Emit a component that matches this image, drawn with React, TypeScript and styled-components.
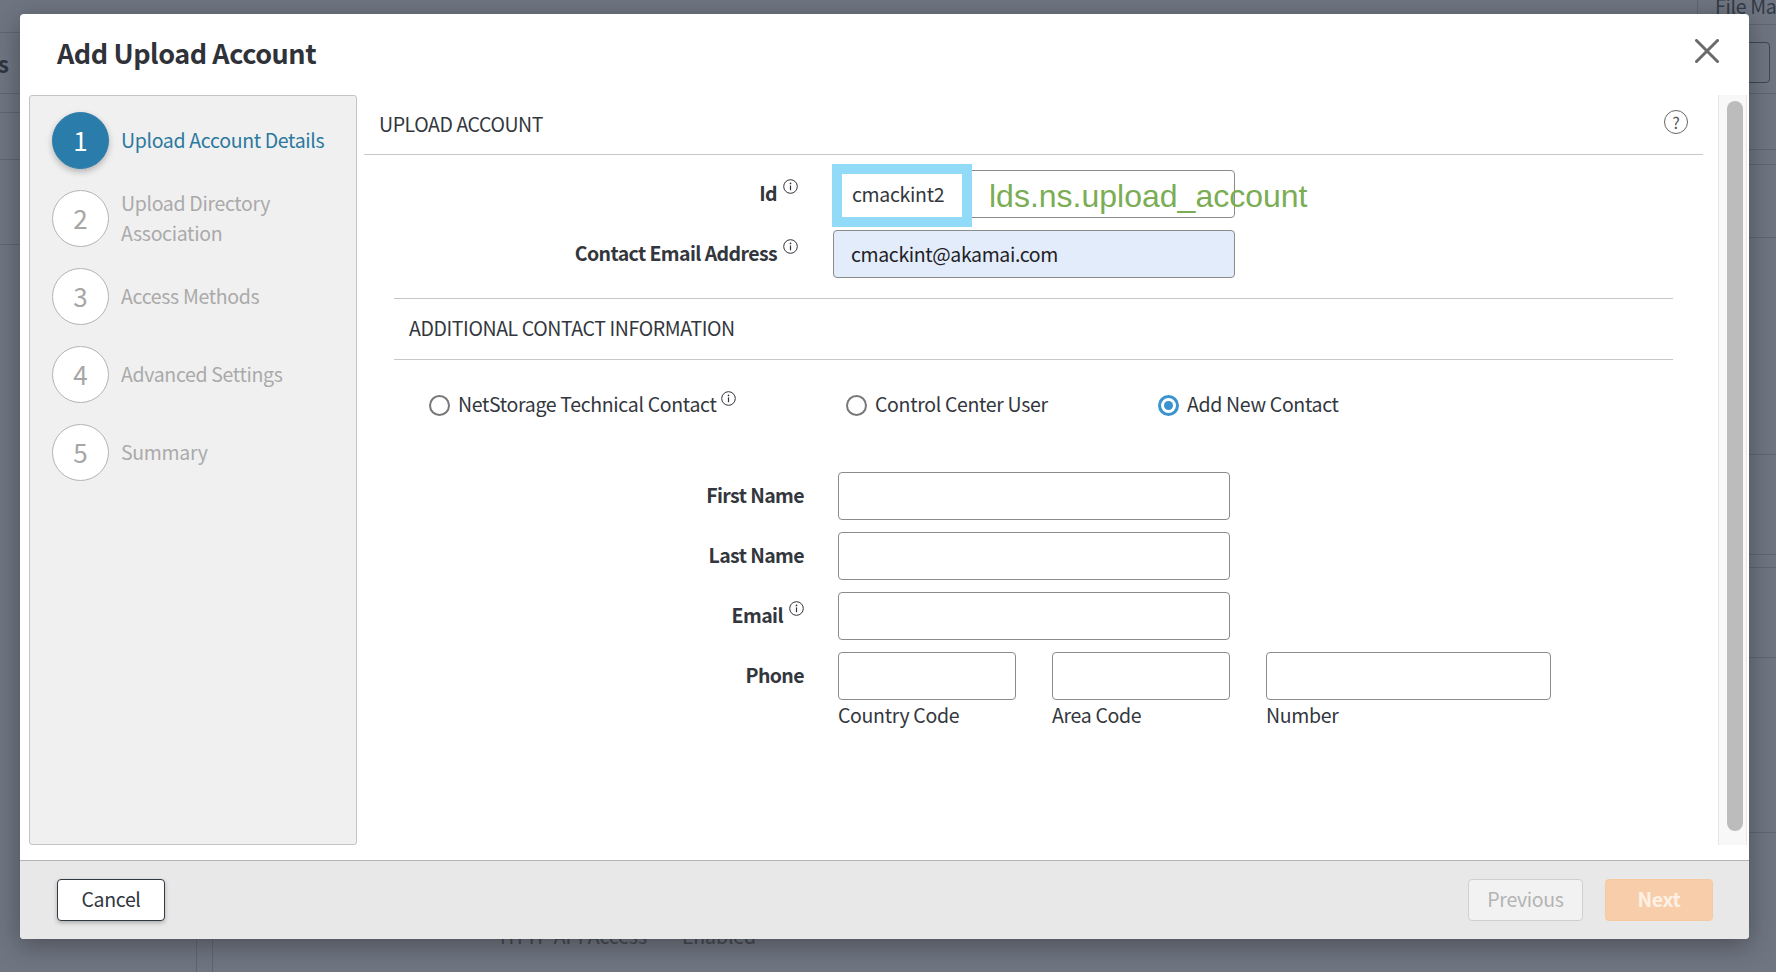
import React from "react";
import styled, { createGlobalStyle, css } from "styled-components";

const STEPS = [
  "Upload Account Details",
  "Upload Directory Association",
  "Access Methods",
  "Advanced Settings",
  "Summary",
];

const LEFT_LINES = [32, 93, 112, 159, 244];
const RIGHT_LINES = [24, 93, 149, 164, 237, 454, 554, 567, 657, 832];

const line = "linear-gradient(#5f6672, #5f6672)";
const backImages = [
  ...LEFT_LINES.map(() => line),
  ...RIGHT_LINES.map(() => line),
  line,
  line,
  line,
].join(", ");
const backSizes = [
  ...LEFT_LINES.map(() => "20px 1px"),
  ...RIGHT_LINES.map(() => "27px 1px"),
  "1px 33px",
  "1px 33px",
  "1px 14px",
].join(", ");
const backPositions = [
  ...LEFT_LINES.map((y) => `0 ${y}px`),
  ...RIGHT_LINES.map((y) => `1749px ${y}px`),
  "196px 939px",
  "212px 939px",
  "1697px 0",
].join(", ");

const InfoIcon = () => (
  <InfoSvg viewBox="0 0 15 15" aria-hidden="true">
    <circle cx="7.5" cy="7.5" r="6.8" fill="none" stroke="#2f3238" strokeWidth="1" />
    <circle cx="7.5" cy="4.4" r="0.85" fill="#2f3238" />
    <path d="M7.5 6.4v4.8" stroke="#2f3238" strokeWidth="1.2" fill="none" />
  </InfoSvg>
);

const App = () => {
  return (
    <Page>
      <GlobalStyle />
      <BackTop>
        <SideWord>Files</SideWord>
        <BackRight>
          <BackTitle>File Manager</BackTitle>
          <BackButton />
        </BackRight>
      </BackTop>
      <BackBottom>
        <BackCell>HTTP API Access</BackCell>
        <BackCell>Enabled</BackCell>
      </BackBottom>

      <Modal>
        <ModalHeader>
          <Title>Add Upload Account</Title>
          <CloseSvg viewBox="0 0 24 24" aria-label="close">
            <path d="M1.5 1.5l21 21M22.5 1.5l-21 21" stroke="#6a6a6a" strokeWidth="3" strokeLinecap="round" fill="none" />
          </CloseSvg>
        </ModalHeader>

        <ModalBody>
          <Sidebar>
            {STEPS.map((step, i) => (
              <Step key={step}>
                <StepCircle $active={i === 0}>{i + 1}</StepCircle>
                <StepLabel $active={i === 0}>{step}</StepLabel>
              </Step>
            ))}
          </Sidebar>

          <Content>
            <SectionTitle>
              UPLOAD ACCOUNT
              <HelpIcon>?</HelpIcon>
            </SectionTitle>

            <AccountFields>
              <FormRow $labelWidth={404} $gap={35} $inputWidth={402}>
                <FieldLabel>
                  Id <InfoIcon />
                </FieldLabel>
                <IdField>
                  <TextInput readOnly aria-label="Id" />
                  <IdHighlight>cmackint2</IdHighlight>
                  <Annotation>lds.ns.upload_account</Annotation>
                </IdField>
              </FormRow>
              <FormRow $labelWidth={404} $gap={35} $inputWidth={402}>
                <FieldLabel>
                  Contact Email Address <InfoIcon />
                </FieldLabel>
                <TextInput $filled readOnly value="cmackint@akamai.com" aria-label="Contact Email Address" />
              </FormRow>
            </AccountFields>

            <SubTitle>ADDITIONAL CONTACT INFORMATION</SubTitle>

            <RadioRow>
              <RadioItem>
                <Radio />
                <RadioText>NetStorage Technical Contact</RadioText>
                <RadioInfo>
                  <InfoIcon />
                </RadioInfo>
              </RadioItem>
              <RadioItem>
                <Radio />
                <RadioText>Control Center User</RadioText>
              </RadioItem>
              <RadioItem>
                <Radio $checked />
                <RadioText>Add New Contact</RadioText>
              </RadioItem>
            </RadioRow>

            <ContactFields>
              <FormRow $labelWidth={410} $gap={34} $inputWidth={392}>
                <FieldLabel>First Name</FieldLabel>
                <TextInput readOnly aria-label="First Name" />
              </FormRow>
              <FormRow $labelWidth={410} $gap={34} $inputWidth={392}>
                <FieldLabel>Last Name</FieldLabel>
                <TextInput readOnly aria-label="Last Name" />
              </FormRow>
              <FormRow $labelWidth={410} $gap={34} $inputWidth={392}>
                <FieldLabel>
                  Email <InfoIcon />
                </FieldLabel>
                <TextInput readOnly aria-label="Email" />
              </FormRow>
              <PhoneRow>
                <FieldLabel>Phone</FieldLabel>
                <PhoneFields>
                  <PhonePart>
                    <TextInput readOnly aria-label="Country Code" />
                    Country Code
                  </PhonePart>
                  <PhonePart>
                    <TextInput readOnly aria-label="Area Code" />
                    Area Code
                  </PhonePart>
                  <PhonePart>
                    <TextInput readOnly aria-label="Number" />
                    Number
                  </PhonePart>
                </PhoneFields>
              </PhoneRow>
            </ContactFields>
          </Content>

          <ScrollTrack>
            <ScrollThumb />
          </ScrollTrack>
        </ModalBody>

        <ModalFooter>
          <CancelButton>Cancel</CancelButton>
          <FooterRight>
            <PreviousButton>Previous</PreviousButton>
            <NextButton>Next</NextButton>
          </FooterRight>
        </ModalFooter>
      </Modal>
    </Page>
  );
};

// the reference font runs a bit narrower than Noto's latin, so tighten it
const bodyText = css`
  font-size: 19.5px;
  letter-spacing: -0.33px;
  line-height: 30px;
`;

const GlobalStyle = createGlobalStyle`
  html, body {
    margin: 0;
    padding: 0;
  }

  body {
    font-family: "Noto Sans CJK SC", "Noto Sans", sans-serif;
    color: #33373d;
  }

  * {
    box-sizing: border-box;
  }
`;

const Page = styled.div`
  position: relative;
  display: flex;
  flex-direction: column;
  justify-content: space-between;
  width: 1776px;
  height: 972px;
  overflow: hidden;
  background-color: #6f7682;
  background-image: ${backImages};
  background-repeat: no-repeat;
  background-size: ${backSizes};
  background-position: ${backPositions};
`;

const BackTop = styled.div`
  display: flex;
  justify-content: space-between;
  height: 90px;
`;

const SideWord = styled.div`
  width: 9px;
  height: 34px;
  margin-top: 46px;
  overflow: hidden;
  direction: rtl;
  font-size: 22px;
  font-weight: 700;
  line-height: 34px;
  color: #2e3440;
`;

const BackRight = styled.div`
  display: flex;
  flex-direction: column;
  align-items: flex-end;
  width: 61px;
`;

const BackTitle = styled.div`
  width: 61px;
  height: 14px;
  overflow: hidden;
  white-space: nowrap;
  ${bodyText}
  line-height: 12px;
  color: #333a47;
`;

const BackButton = styled.div`
  width: 40px;
  height: 41px;
  margin: 28px 6px 0 0;
  border: 1px solid #3f4652;
  border-radius: 4px;
`;

const BackBottom = styled.div`
  display: flex;
  gap: 35px;
  height: 42px;
  padding-left: 500px;
  font-size: 19.5px;
  letter-spacing: -0.1px;
  line-height: 12px;
  color: #40454e;
`;

const BackCell = styled.div`
  white-space: nowrap;
`;

const Modal = styled.div`
  position: absolute;
  top: 14px;
  left: 20px;
  display: flex;
  flex-direction: column;
  width: 1729px;
  height: 925px;
  overflow: hidden;
  background: #fff;
  border-radius: 4px;
  box-shadow: 0 6px 26px rgba(30, 30, 30, 0.45);
`;

const ModalHeader = styled.div`
  display: flex;
  flex: none;
  justify-content: space-between;
  height: 81px;
  padding: 25px 30px 0 37px;
`;

const Title = styled.h1`
  margin: -1px 0 0;
  font-size: 27px;
  font-weight: 700;
  letter-spacing: -0.45px;
  line-height: 30px;
  color: #2f3238;
`;

const CloseSvg = styled.svg`
  width: 24px;
  height: 24px;
`;

const ModalBody = styled.div`
  display: flex;
  flex: 1;
  min-height: 0;
  padding-left: 9px;
`;

const Sidebar = styled.aside`
  display: flex;
  flex: none;
  flex-direction: column;
  gap: 21px;
  width: 328px;
  height: 750px;
  padding: 16px 10px 0 22px;
  background: #f0f0f0;
  border: 1px solid #c4c4c4;
  border-radius: 3px;
`;

const Step = styled.div`
  display: flex;
  align-items: center;
  gap: 12px;
  height: 57px;
`;

const StepCircle = styled.div<{ $active?: boolean }>`
  display: flex;
  flex: none;
  align-items: center;
  justify-content: center;
  width: 57px;
  height: 57px;
  padding-bottom: 1px;
  font-size: 26px;
  line-height: 30px;
  color: ${(p) => (p.$active ? "#fff" : "#a6a6a6")};
  background: ${(p) => (p.$active ? "#2a7dab" : "#fff")};
  border: 1px solid ${(p) => (p.$active ? "#2a7dab" : "#b4b4b4")};
  border-radius: 50%;
  box-shadow: ${(p) => (p.$active ? "0 3px 6px rgba(0, 0, 0, 0.25)" : "none")};
`;

const StepLabel = styled.div<{ $active?: boolean }>`
  ${bodyText}
  margin-top: -2px;
  color: ${(p) => (p.$active ? "#2b799f" : "#aaaaaa")};
`;

const Content = styled.main`
  flex: none;
  width: 1339px;
  margin-left: 7px;
`;

const SectionTitle = styled.div`
  display: flex;
  align-items: center;
  justify-content: space-between;
  height: 60px;
  padding: 0 15px 2px 15px;
  ${bodyText}
  letter-spacing: -0.42px;
  color: #33373d;
  border-bottom: 1px solid #c8c8c8;
`;

const HelpIcon = styled.span`
  display: flex;
  align-items: center;
  justify-content: center;
  width: 24px;
  height: 24px;
  margin-top: -3px;
  font-size: 16px;
  letter-spacing: 0;
  line-height: 20px;
  color: #555;
  border: 1px solid #666;
  border-radius: 50%;
`;

const AccountFields = styled.div`
  display: flex;
  flex-direction: column;
  gap: 12px;
  padding: 15px 0 20px 30px;
`;

const FormRow = styled.div<{ $labelWidth: number; $gap: number; $inputWidth: number }>`
  display: grid;
  grid-template-columns: ${(p) => p.$labelWidth}px ${(p) => p.$inputWidth}px;
  column-gap: ${(p) => p.$gap}px;
  align-items: center;
  height: 48px;
`;

const FieldLabel = styled.label`
  display: flex;
  align-items: center;
  justify-content: flex-end;
  gap: 6px;
  padding-bottom: 2px;
  ${bodyText}
  font-weight: 600;
  letter-spacing: -0.6px;
  color: #33373d;
`;

const InfoSvg = styled.svg`
  flex: none;
  width: 15px;
  height: 15px;
  margin-top: -13px;
`;

const IdField = styled.div`
  position: relative;
  height: 48px;
`;

const TextInput = styled.input<{ $filled?: boolean }>`
  display: block;
  width: 100%;
  height: 48px;
  padding: 0 17px 1px;
  font-family: inherit;
  font-size: 19.5px;
  letter-spacing: -0.38px;
  color: #1f2226;
  background: ${(p) => (p.$filled ? "#e3ecfb" : "#fff")};
  border: 1px solid #8b8b8b;
  border-radius: 4px;
  outline: none;
`;

const IdHighlight = styled.div`
  position: absolute;
  top: -6px;
  left: -1px;
  width: 140px;
  height: 63px;
  padding-left: 10px;
  ${bodyText}
  line-height: 39px;
  color: #33373d;
  background: #fff;
  border: 10px solid #92dbf8;
`;

const Annotation = styled.div`
  position: absolute;
  top: 6px;
  left: 156px;
  font-family: "Liberation Sans", Arial, sans-serif;
  font-size: 32px;
  line-height: 40px;
  white-space: nowrap;
  color: #7aad54;
`;

const SubTitle = styled.div`
  display: flex;
  align-items: center;
  width: 1279px;
  height: 62px;
  margin-left: 30px;
  padding: 0 0 2px 15px;
  ${bodyText}
  letter-spacing: -0.4px;
  color: #33373d;
  border-top: 1px solid #c8c8c8;
  border-bottom: 1px solid #c8c8c8;
`;

const RadioRow = styled.div`
  display: grid;
  grid-template-columns: 417px 312px auto;
  align-items: center;
  height: 90px;
  padding: 0 0 0 65px;
`;

const RadioItem = styled.div`
  position: relative;
  display: flex;
  align-items: center;
  gap: 9px;
  ${bodyText}
  color: #33373d;
`;

const RadioText = styled.span`
  margin: -2px 0 0 -1px;
`;

const RadioInfo = styled.span`
  display: flex;
  margin-left: -4px;
`;

const Radio = styled.span<{ $checked?: boolean }>`
  flex: none;
  width: 21px;
  height: 21px;
  background: ${(p) => (p.$checked ? "#3a94cf" : "#fff")};
  background-clip: content-box;
  border: ${(p) => (p.$checked ? "3px solid #3a94cf" : "2px solid #777")};
  border-radius: 50%;
  padding: ${(p) => (p.$checked ? "3px" : "0")};
`;

const ContactFields = styled.div`
  display: flex;
  flex-direction: column;
  gap: 12px;
  padding: 22px 0 0 30px;
`;

const PhoneRow = styled.div`
  display: grid;
  grid-template-columns: 410px auto;
  column-gap: 34px;
  align-items: start;

  > label {
    height: 48px;
  }
`;

const PhoneFields = styled.div`
  display: grid;
  grid-template-columns: 178px 178px 285px;
  column-gap: 36px;
`;

const PhonePart = styled.div`
  display: flex;
  flex-direction: column;
  ${bodyText}
  color: #33373d;
`;

const ScrollTrack = styled.div`
  flex: none;
  width: 29px;
  height: 750px;
  margin-left: 15px;
  padding: 6px 5px 0 8px;
  background: #f8f8f8;
  border-left: 1px solid #e6e6e6;
  border-right: 1px solid #e6e6e6;
`;

const ScrollThumb = styled.div`
  width: 16px;
  height: 730px;
  background: #bcbcbc;
  border-radius: 8px;
`;

const ModalFooter = styled.footer`
  display: flex;
  flex: none;
  align-items: flex-start;
  justify-content: space-between;
  height: 79px;
  padding: 18px 36px 0 37px;
  background: #e8e8e8;
  border-top: 1px solid #b4b4b4;
`;

const FooterRight = styled.div`
  display: flex;
  gap: 22px;
`;

const BaseButton = styled.button`
  height: 42px;
  padding: 0 0 2px;
  font-family: inherit;
  ${bodyText}
  border-radius: 4px;
`;

const CancelButton = styled(BaseButton)`
  width: 108px;
  color: #2f3640;
  background: #fff;
  border: 1px solid #2f3a45;
  box-shadow: 0 2px 4px rgba(0, 0, 0, 0.25);
`;

const PreviousButton = styled(BaseButton)`
  width: 115px;
  color: #b4b4b4;
  background: #f2f2f2;
  border: 1px solid #d0d0d0;
`;

const NextButton = styled(BaseButton)`
  width: 108px;
  font-weight: 600;
  color: #fdf1e6;
  background: #f8ceaa;
  border: 1px solid #f5c8a2;
`;

export default App;
